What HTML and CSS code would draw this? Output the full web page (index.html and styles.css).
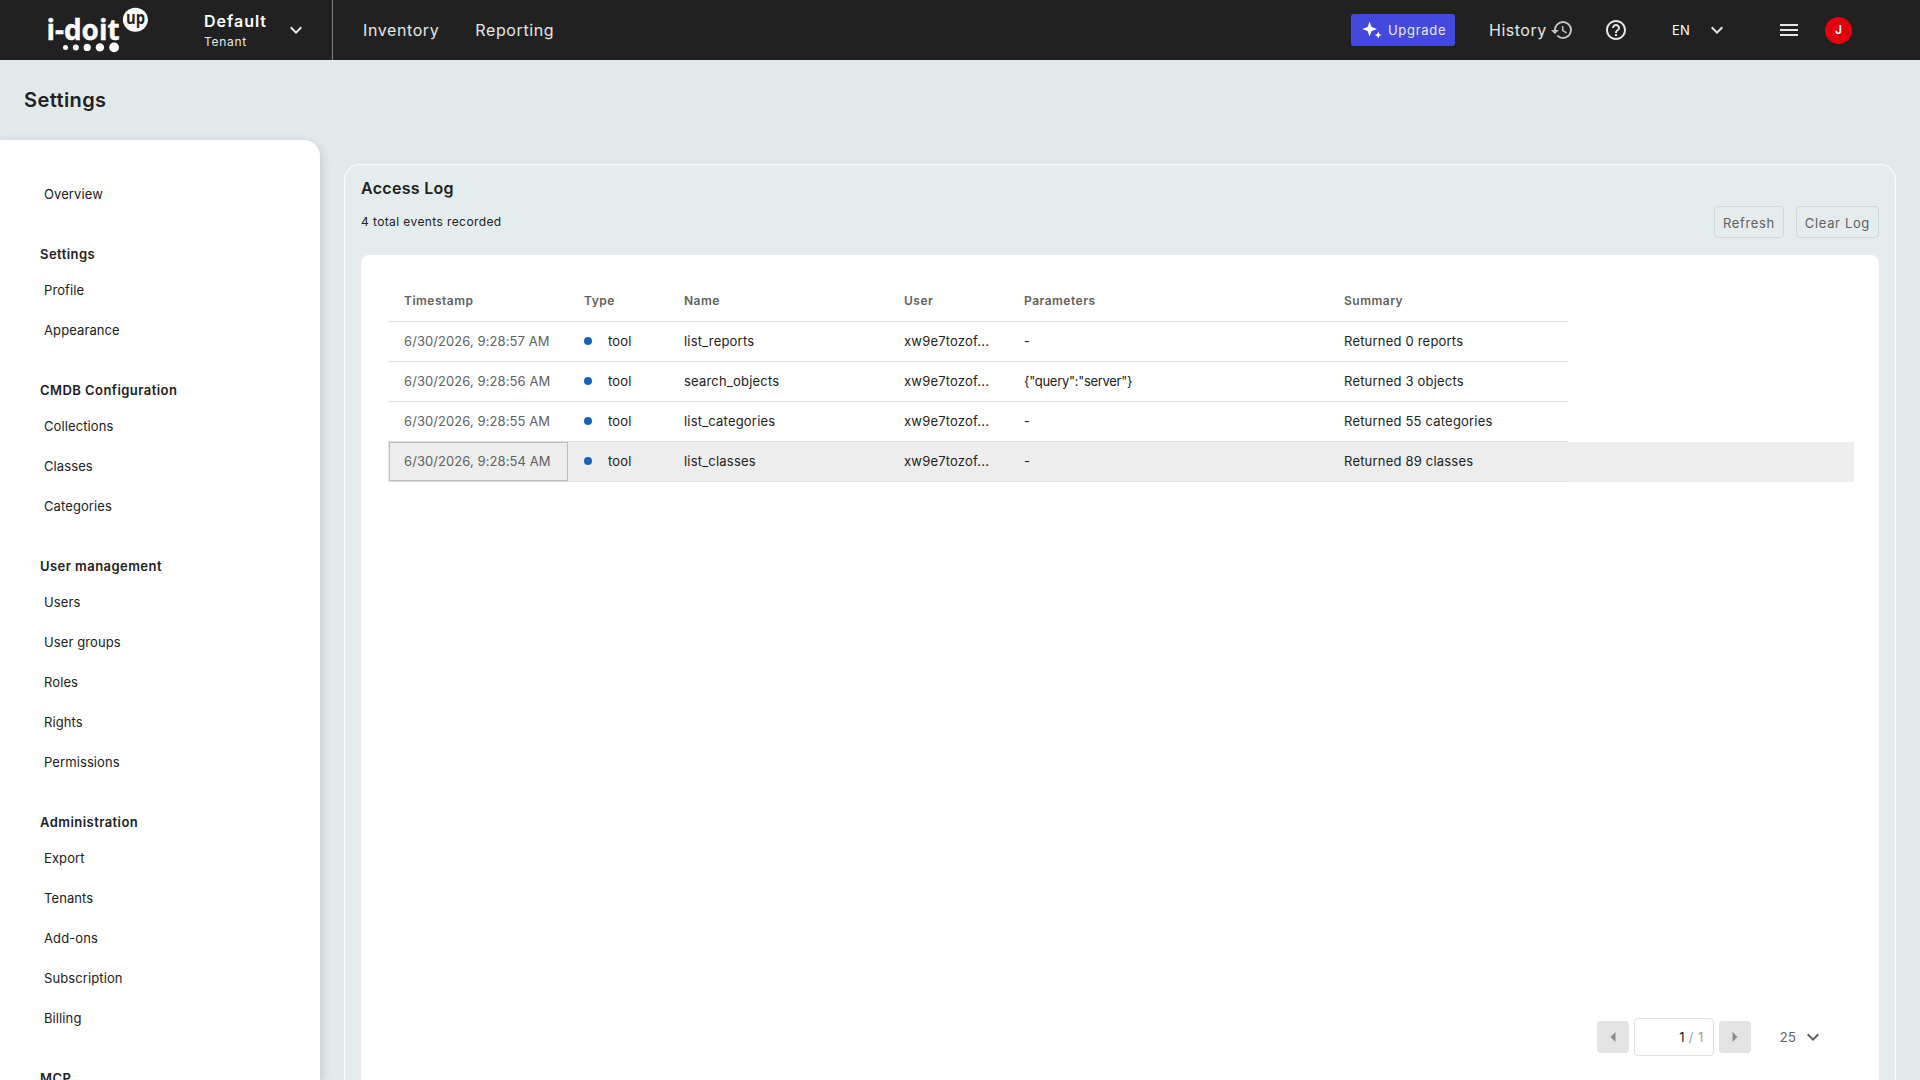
FILE: index.html
```
<!DOCTYPE html>
<html lang="en">
<head>
    <meta charset="UTF-8">
    <meta name="viewport" content="width=device-width, initial-scale=1.0">
    <title>Access Log</title>
    <link rel="stylesheet" href="styles.css">
</head>
<body>
    <header class="topbar">
        <svg class="logo" width="110" height="60" viewBox="0 0 110 60" fill="#fff">
            <text class="logo-name" x="6.5" y="39.7" textLength="73" lengthAdjust="spacingAndGlyphs">i-doit</text>
            <circle cx="25.5" cy="47.4" r="2.5"/>
            <circle cx="35.8" cy="47.4" r="3"/>
            <circle cx="47.2" cy="47.4" r="3.6"/>
            <circle cx="59.9" cy="47.4" r="4.2"/>
            <circle cx="74.1" cy="47.4" r="4.9"/>
            <ellipse cx="95.4" cy="19.8" rx="12.5" ry="12"/>
            <text class="logo-up" x="86" y="24" textLength="19" lengthAdjust="spacingAndGlyphs">up</text>
        </svg>
        <div class="tenant">
            <div class="tenant-text">
                <div class="tenant-name">Default</div>
                <div class="tenant-label">Tenant</div>
            </div>
            <svg class="chevron" width="24" height="24" viewBox="0 0 24 24"><path d="M7.41 8.59 12 13.17l4.59-4.58L18 10l-6 6-6-6z"/></svg>
        </div>
        <nav class="main-nav">
            <a>Inventory</a>
            <a>Reporting</a>
        </nav>
        <div class="actions">
            <button class="upgrade">
                <svg width="20" height="20" viewBox="0 0 20 20"><path d="M7.6 1.6 9.6 7 15 9 9.6 11 7.6 16.4 5.6 11 .2 9 5.6 7zM16.2 11.6l1 2.4 2.4 1-2.4 1-1 2.4-1-2.4-2.4-1 2.4-1z"/></svg>
                <span>Upgrade</span>
            </button>
            <a class="history">
                <span>History</span>
                <svg width="24" height="24" viewBox="0 0 24 24"><path d="M13 3a9 9 0 0 0-9 9H1l3.89 3.89.07.14L9 12H6c0-3.87 3.13-7 7-7s7 3.13 7 7-3.13 7-7 7c-1.93 0-3.68-.79-4.94-2.06l-1.42 1.42A8.954 8.954 0 0 0 13 21a9 9 0 0 0 0-18zm-1 5v5l4.28 2.54.72-1.21-3.5-2.08V8H12z"/></svg>
            </a>
            <svg class="help" width="24" height="24" viewBox="0 0 24 24"><path d="M11 18h2v-2h-2v2zm1-16C6.48 2 2 6.48 2 12s4.48 10 10 10 10-4.48 10-10S17.52 2 12 2zm0 18c-4.41 0-8-3.59-8-8s3.59-8 8-8 8 3.59 8 8-3.59 8-8 8zm0-14c-2.21 0-4 1.79-4 4h2c0-1.1.9-2 2-2s2 .9 2 2c0 2-3 1.75-3 5h2c0-2.25 3-2.5 3-5 0-2.21-1.79-4-4-4z"/></svg>
            <div class="language">
                <span>EN</span>
                <svg class="chevron" width="24" height="24" viewBox="0 0 24 24"><path d="M7.41 8.59 12 13.17l4.59-4.58L18 10l-6 6-6-6z"/></svg>
            </div>
            <svg class="burger" width="24" height="24" viewBox="0 0 24 24"><path d="M3 18h18v-2H3v2zm0-5h18v-2H3v2zm0-7v2h18V6H3z"/></svg>
            <div class="avatar">J</div>
        </div>
    </header>

    <h1 class="page-title">Settings</h1>

    <div class="layout">
        <aside class="sidebar">
            <a class="item">Overview</a>
            <h3>Settings</h3>
            <a class="item">Profile</a>
            <a class="item">Appearance</a>
            <h3>CMDB Configuration</h3>
            <a class="item">Collections</a>
            <a class="item">Classes</a>
            <a class="item">Categories</a>
            <h3>User management</h3>
            <a class="item">Users</a>
            <a class="item">User groups</a>
            <a class="item">Roles</a>
            <a class="item">Rights</a>
            <a class="item">Permissions</a>
            <h3>Administration</h3>
            <a class="item">Export</a>
            <a class="item">Tenants</a>
            <a class="item">Add-ons</a>
            <a class="item">Subscription</a>
            <a class="item">Billing</a>
            <h3>MCP</h3>
        </aside>

        <main class="panel">
            <h2>Access Log</h2>
            <div class="toolbar">
                <p>4 total events recorded</p>
                <div class="buttons">
                    <button class="btn">Refresh</button>
                    <button class="btn">Clear Log</button>
                </div>
            </div>
            <div class="card">
                <div class="table">
                    <div class="row head">
                        <div class="cell">Timestamp</div>
                        <div class="cell">Type</div>
                        <div class="cell">Name</div>
                        <div class="cell">User</div>
                        <div class="cell">Parameters</div>
                        <div class="cell">Summary</div>
                    </div>
                    <div class="row">
                        <div class="cell time">6/30/2026, 9:28:57 AM</div>
                        <div class="cell type"><span class="dot"></span>tool</div>
                        <div class="cell">list_reports</div>
                        <div class="cell">xw9e7tozof...</div>
                        <div class="cell params">-</div>
                        <div class="cell">Returned 0 reports</div>
                    </div>
                    <div class="row">
                        <div class="cell time">6/30/2026, 9:28:56 AM</div>
                        <div class="cell type"><span class="dot"></span>tool</div>
                        <div class="cell">search_objects</div>
                        <div class="cell">xw9e7tozof...</div>
                        <div class="cell params">{"query":"server"}</div>
                        <div class="cell">Returned 3 objects</div>
                    </div>
                    <div class="row">
                        <div class="cell time">6/30/2026, 9:28:55 AM</div>
                        <div class="cell type"><span class="dot"></span>tool</div>
                        <div class="cell">list_categories</div>
                        <div class="cell">xw9e7tozof...</div>
                        <div class="cell params">-</div>
                        <div class="cell">Returned 55 categories</div>
                    </div>
                    <div class="row active">
                        <div class="cell time focused">6/30/2026, 9:28:54 AM</div>
                        <div class="cell type"><span class="dot"></span>tool</div>
                        <div class="cell">list_classes</div>
                        <div class="cell">xw9e7tozof...</div>
                        <div class="cell params">-</div>
                        <div class="cell">Returned 89 classes</div>
                    </div>
                </div>
                <div class="pager">
                    <button class="page-btn"><svg width="6" height="10" viewBox="0 0 6 10"><path d="M5.5 0v10L.5 5z"/></svg></button>
                    <div class="page-input"><span>1</span><span class="total">/ 1</span></div>
                    <button class="page-btn"><svg width="6" height="10" viewBox="0 0 6 10"><path d="M.5 0v10l5-5z"/></svg></button>
                    <div class="page-size">
                        <span>25</span>
                        <svg width="24" height="24" viewBox="0 0 24 24"><path d="M7.41 8.59 12 13.17l4.59-4.58L18 10l-6 6-6-6z"/></svg>
                    </div>
                </div>
            </div>
        </main>
    </div>
</body>
</html>
```
FILE: styles.css
```
* {
    box-sizing: border-box;
}
body {
    margin: 0;
    height: 100vh;
    overflow: hidden;
    display: flex;
    flex-direction: column;
    font-family: Inter, sans-serif;
    font-size: 13px;
    letter-spacing: 0.2px;
    color: #212121;
    background-color: #e1e9eb;
}
button {
    font-family: inherit;
    cursor: pointer;
}
svg {
    flex-shrink: 0;
}

/* Top bar */
.topbar {
    display: flex;
    align-items: center;
    height: 60px;
    flex-shrink: 0;
    padding-left: 40px;
    background-color: #212121;
    color: #e6e6e6;
    fill: #e6e6e6;
}
.logo-name {
    font: bold 28px "Open Sans", sans-serif;
    letter-spacing: 0;
    stroke: #fff;
    stroke-width: 0.4px;
}
.logo-up {
    font: bold 17px "Open Sans", sans-serif;
    letter-spacing: 0;
    fill: #212121;
}
.tenant {
    display: flex;
    align-items: center;
    justify-content: space-between;
    width: 129px;
    height: 60px;
    margin-left: 54px;
    padding-right: 24px;
    border-right: 1px solid #808080;
}
.tenant-text {
    padding-top: 2px;
}
.tenant-name {
    font-size: 16px;
    font-weight: 600;
    line-height: 20px;
    letter-spacing: 1px;
    color: #fff;
}
.tenant-label {
    font-size: 12px;
    line-height: 21px;
    letter-spacing: 0.7px;
}
.main-nav {
    display: flex;
    gap: 36px;
    margin-left: 30px;
    font-size: 16px;
    letter-spacing: 0.6px;
}
.actions {
    display: flex;
    align-items: center;
    margin-left: auto;
    padding-right: 68px;
}
.upgrade {
    display: flex;
    align-items: center;
    gap: 6px;
    width: 104px;
    height: 32px;
    padding: 0 0 0 11px;
    margin-right: 34px;
    border: none;
    border-radius: 3px;
    background-color: #4349dd;
    color: #e9e9fb;
    fill: #fff;
    font-size: 13px;
    letter-spacing: 0.7px;
}
.history {
    display: flex;
    align-items: center;
    gap: 3px;
    width: 115px;
    font-size: 16px;
    letter-spacing: 0.5px;
}
.history svg {
    fill: #c4c4c4;
}
.language {
    display: flex;
    align-items: center;
    justify-content: space-between;
    width: 57px;
    margin-left: 44px;
    color: #fff;
}
.burger {
    margin-left: 48px;
}
.avatar {
    width: 27px;
    height: 27px;
    margin-left: 24px;
    border-radius: 50%;
    background-color: #e3000f;
    color: #fff;
    font-size: 12px;
    font-weight: 600;
    line-height: 26px;
    text-align: center;
}

.page-title {
    flex-shrink: 0;
    height: 80px;
    margin: 0;
    padding-left: 24px;
    font-size: 20px;
    font-weight: 600;
    line-height: 80px;
    letter-spacing: 0.4px;
}
.layout {
    display: flex;
    flex: 1;
    min-height: 0;
}

/* Settings menu */
.sidebar {
    width: 320px;
    flex-shrink: 0;
    padding: 34px 40px 0;
    overflow: hidden;
    border-radius: 0 16px 0 0;
    background-color: #fff;
    box-shadow: 0 4px 12px rgba(0, 40, 50, 0.2);
}
.sidebar h3 {
    height: 56px;
    margin: 0;
    padding-top: 20px;
    font-size: 13px;
    font-weight: 600;
    line-height: 40px;
    letter-spacing: 0.45px;
}
.item {
    display: block;
    height: 40px;
    padding-left: 4px;
    line-height: 40px;
    letter-spacing: 0.1px;
}

/* Access log */
.panel {
    display: flex;
    flex-direction: column;
    flex: 1;
    height: 940px;
    margin: 24px 24px 0;
    padding: 11px 16px 0;
    border: 1px solid #fff;
    border-radius: 16px;
    background-color: #e5eced;
}
.panel h2 {
    margin: 0;
    font-size: 16px;
    font-weight: 600;
    line-height: 24px;
    letter-spacing: 0.3px;
}
.toolbar {
    display: flex;
    align-items: center;
    justify-content: space-between;
    height: 32px;
    margin: 6px 0 17px;
}
.toolbar p {
    margin: 0 0 2px;
    font-size: 12px;
    letter-spacing: 0.4px;
}
.buttons {
    display: flex;
    gap: 12px;
}
.btn {
    height: 32px;
    padding: 1px 8px 0;
    border: 1px solid #d0d7d9;
    border-radius: 4px;
    background: none;
    color: #616161;
    font-size: 13px;
    letter-spacing: 0.65px;
}
.card {
    display: flex;
    flex-direction: column;
    flex: 1;
    padding: 26px 25px 0 27px;
    border-radius: 8px 8px 0 0;
    background-color: #fff;
}
.row {
    display: grid;
    grid-template-columns: 180px 100px 220px 120px 320px 240px;
    height: 40px;
}
.cell {
    display: flex;
    align-items: center;
    padding: 0 16px 1px;
    border-bottom: 1px solid #e0e0e0;
    white-space: nowrap;
}
.head {
    height: 41px;
    font-size: 12px;
    font-weight: 600;
    letter-spacing: 0.5px;
    color: #616161;
}
.time {
    color: #616161;
    letter-spacing: 0.08px;
}
.params {
    letter-spacing: -0.3px;
}
.dot {
    width: 8px;
    height: 8px;
    margin-right: 16px;
    border-radius: 50%;
    background-color: #1565c0;
}
.active {
    background-color: #ededed;
}
.focused {
    position: relative;
}
.focused::after {
    content: "";
    position: absolute;
    inset: 0 0 0 1px;
    border: 1px solid #bdbdbd;
}

/* Pagination */
.pager {
    display: flex;
    align-items: center;
    justify-content: flex-end;
    gap: 5px;
    margin-top: 536px;
    padding-right: 29px;
    color: #616161;
    fill: #616161;
}
.page-btn {
    display: flex;
    align-items: center;
    justify-content: center;
    width: 32px;
    height: 32px;
    padding: 0;
    border: none;
    border-radius: 4px;
    background-color: #e3e3e3;
    fill: #8c8c8c;
}
.page-input {
    display: flex;
    align-items: center;
    justify-content: flex-end;
    gap: 4px;
    width: 80px;
    height: 38px;
    padding-right: 9px;
    border: 1px solid #e0e0e0;
    border-radius: 4px;
    color: #212121;
}
.total {
    color: #9e9e9e;
    letter-spacing: 0.5px;
}
.page-size {
    display: flex;
    align-items: center;
    gap: 5px;
    margin-left: 24px;
}
```
